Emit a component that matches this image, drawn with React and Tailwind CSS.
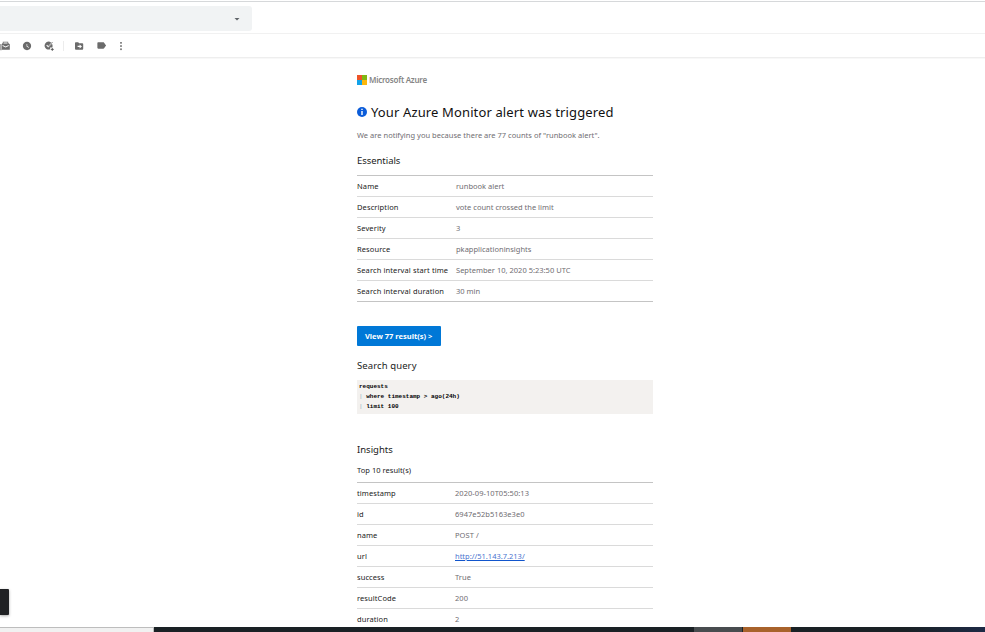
import React from "react";
import { MdWatchLater, MdLabel, MdArrowDropDown } from "react-icons/md";

const essentials = [
  ["Name", "runbook alert"],
  ["Description", "vote count crossed the limit"],
  ["Severity", "3"],
  ["Resource", "pkapplicationinsights"],
  ["Search interval start time", "September 10, 2020 5:23:50 UTC"],
  ["Search interval duration", "30 min"],
];

const insights = [
  ["timestamp", "2020-09-10T05:50:13"],
  ["id", "6947e52b5163e3e0"],
  ["name", "POST /"],
  ["url", "http://51.143.7.213/"],
  ["success", "True"],
  ["resultCode", "200"],
  ["duration", "2"],
];

function MailIcon() {
  return (
    <svg viewBox="0 0 11 10" className="h-[10px] w-[11px] shrink-0" fill="#6b6b6b">
      <path d="M0 3h1v5.5h.8v.8H0z" opacity=".6" />
      <path fillRule="evenodd" d="M1.5 3.2 2.8 2V.8h5.4V2l1.6 1.2v5.6H1.5zM3.5 1.6v1h4v-1zM2.6 4v.9l3 1.5L8.7 4.9V4L5.6 5.4z" />
    </svg>
  );
}

function TaskIcon() {
  return (
    <svg viewBox="0 0 10 10" className="h-[10px] w-[10px] shrink-0" fill="none">
      <path d="M4.4.6a4 4 0 1 0 1.7 7.7V6.6h2.1a4 4 0 0 0-.3-3.9L4.2 6.5 2.3 4.6l.8-.8 1.1 1.1L7.2 1.8A4 4 0 0 0 4.4.6z" fill="#6b6b6b" />
      <path d="M4.4 5.3 8.6 1" stroke="#6b6b6b" strokeWidth=".8" />
      <path d="M8.3 6.9v3M6.8 8.4h3" stroke="#555" strokeWidth=".9" />
    </svg>
  );
}

function MoveIcon() {
  return (
    <svg viewBox="0 0 10 10" className="h-[10px] w-[10px] shrink-0">
      <path d="M1 2q0-.8.8-.8h2.4l.9 1h3.2q.9 0 .9.8v4.8q0 .9-.9.9H1.9Q1 8.7 1 7.8z" fill="#6b6b6b" />
      <path d="M3.600 4.700h2V3.400L8 5.400l-2.400 2V6.100h-2z" fill="#fff" />
    </svg>
  );
}

function MoreIcon() {
  return (
    <svg viewBox="0 0 4 10" className="h-[10px] w-[4px] shrink-0" fill="#8a8a8a">
      <rect x="1" y="1" width="2" height="1.7" />
      <rect x="1" y="4.2" width="2" height="1.7" />
      <rect x="1" y="7.4" width="2" height="1.7" />
    </svg>
  );
}

function Toolbar() {
  return (
    <>
      <div className="mt-px h-px bg-[#d6d8da]" />
      <div className="h-[32px] border-b border-[#f1f1f1] pt-1">
        <div className="flex h-[25px] w-[252px] items-center justify-end rounded-r-[3px] bg-[#f1f3f4] pr-[9px]">
          <MdArrowDropDown className="h-3 w-3 text-[#5f6368]" />
        </div>
      </div>
      <div className="flex h-[24px] items-center border-b border-[#eeeeee] text-[#6b6b6b] shadow-[0_1px_0_#f8f8f8]">
        <MailIcon />
        <MdWatchLater className="ml-[11px] h-[10px] w-[10px] shrink-0" />
        <div className="ml-3 flex"><TaskIcon /></div>
        <div className="ml-[9px] h-[10px] w-px bg-[#ececec]" />
        <div className="ml-[10px] flex"><MoveIcon /></div>
        <MdLabel className="ml-[12px] h-[11px] w-[11px] shrink-0" />
        <div className="ml-[12px] flex"><MoreIcon /></div>
      </div>
    </>
  );
}

function Email() {
  return (
    <main className="ml-[357px] w-[296px]">
      <div className="mt-[17px] flex h-[10px] items-center">
        <div className="grid h-[10px] w-[10px] grid-cols-2">
          <i className="bg-[#ee5327]" />
          <i className="bg-[#80b712]" />
          <i className="bg-[#12a2e9]" />
          <i className="bg-[#fdb80c]" />
        </div>
        <span className="ml-[2px] text-[8px] leading-[10px] font-semibold tracking-[-0.24px] whitespace-nowrap text-[#858585]">Microsoft Azure</span>
      </div>
      <div className="mt-[17px] flex h-5 items-center">
        <svg viewBox="0 0 10 10" className="h-[10px] w-[10px]">
          <circle cx="5" cy="5" r="5" fill="#0b5cd9" />
          <path d="M4.3 1.8h1.4v1.3H4.3zM4.3 4h1.4v4H4.3z" fill="#fff" />
        </svg>
        <h1 className="ml-1 text-[13px] leading-5 tracking-[0.13px] whitespace-nowrap text-[#111]">Your Azure Monitor alert was triggered</h1>
      </div>
      <p className="mt-[8px] text-[7.5px] leading-[10px] tracking-[0.02px] whitespace-nowrap text-[#6f6d72]">
        We are notifying you because there are 77 counts of "runbook alert".
      </p>
      <h2 className="mt-[14px] text-[9.5px] leading-[14px] tracking-[-0.05px] text-[#1a1a1a]">Essentials</h2>
      <div className="mt-[7px] border-t border-[#c4c4c4]">
        {essentials.map(([k, v]) => (
          <div key={k} className="flex h-[21px] items-center border-b border-[#dadada] text-[7.5px] leading-[10px] whitespace-nowrap last:border-[#c4c4c4]">
            <span className="w-[99px] tracking-[0.11px] text-[#222]">{k}</span>
            <span className="tracking-[0.01px] text-[#6f6d72]">{v}</span>
          </div>
        ))}
      </div>
      <button className="mt-6 flex h-5 w-[84px] items-center rounded-[1px] bg-[#0078d7] pl-2 text-[7.5px] leading-[10px] font-bold whitespace-nowrap text-white">
        View 77 result(s) &gt;
      </button>
      <h2 className="mt-[13px] text-[9.5px] leading-[14px] tracking-[0.1px] text-[#222]">Search query</h2>
      <pre className="mt-[7px] h-[34px] bg-[#f3f1ef] pt-[2px] pl-[2px] font-['Liberation_Mono',monospace] text-[6px] leading-[10px] font-bold text-black">
        {"requests\n"}<span className="font-normal text-[#8ab]">|</span>{" where timestamp > ago(24h)\n"}<span className="font-normal text-[#8ab]">|</span>{" limit 100"}
      </pre>
      <h2 className="mt-[29px] text-[9.5px] leading-[14px] text-[#1a1a1a]">Insights</h2>
      <h3 className="mt-[8px] text-[7.5px] leading-[10px] tracking-[0.04px] text-[#222]">Top 10 result(s)</h3>
      <div className="mt-[7px] border-t border-[#c4c4c4]">
        {insights.map(([k, v]) => (
          <div key={k} className="flex h-[21px] items-center border-b border-[#dadada] text-[7.5px] leading-[10px] whitespace-nowrap">
            <span className="w-[98px] tracking-[0.09px] text-[#222]">{k}</span>
            {k === "url" ? (
              <a className="text-[#4a74cf] underline decoration-[#1155cc] decoration-1">{v}</a>
            ) : (
              <span className="tracking-[0.05px] text-[#6f6d72]">{v}</span>
            )}
          </div>
        ))}
      </div>
    </main>
  );
}

export default function App() {
  return (
    <div className="relative flex h-[632px] w-[985px] flex-col overflow-hidden bg-white font-['Noto_Sans',sans-serif]">
      <div className="h-[627px] shrink-0 overflow-hidden">
        <Toolbar />
        <Email />
      </div>
      <footer className="flex h-[5px] shrink-0 bg-[#1a2125]">
        <div className="h-full w-[154px] border-t border-r border-[#bdbdbd] bg-[#f1f1f1]" />
        <div className="ml-[540px] h-full w-[48px] bg-[#484c4f]" />
        <div className="ml-px h-full w-[48px] bg-[#a8622b]" />
        <div className="ml-[114px] h-full flex-1 bg-linear-to-r from-[#1a2125] to-[#1d2a45]" />
      </footer>
      <div className="absolute top-[589px] left-0 h-[26px] w-[9px] rounded-r-[1px] bg-[#202124] shadow-[0_1px_3px_rgba(0,0,0,0.35)]" />
    </div>
  );
}
